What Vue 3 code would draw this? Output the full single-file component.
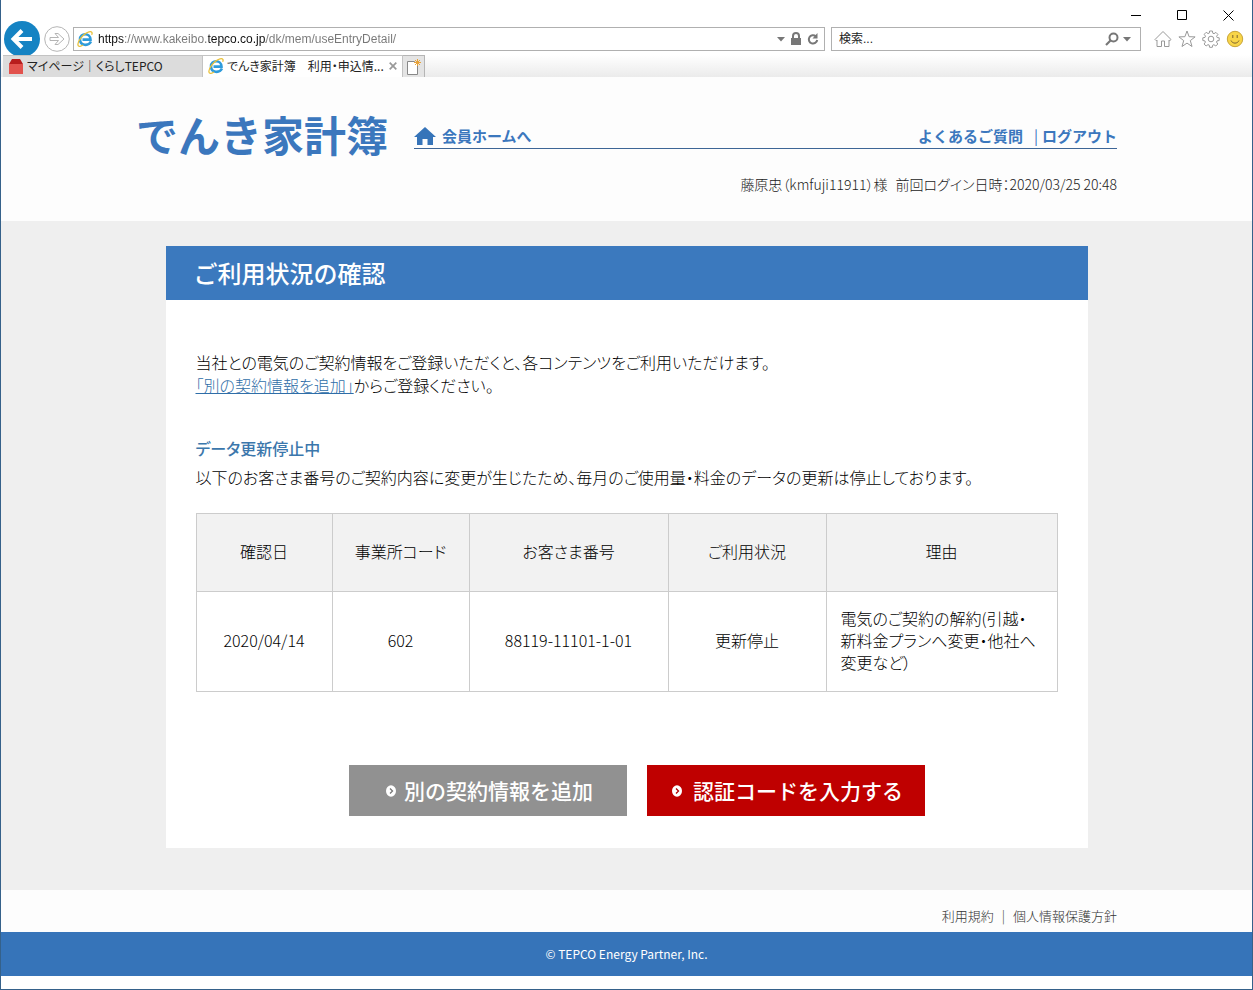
<script setup>
import { ref } from 'vue'

const address = ref('https://www.kakeibo.tepco.co.jp/dk/mem/useEntryDetail/')
const keyword = ref('')
const columns = ['確認日', '事業所コード', 'お客さま番号', 'ご利用状況', '理由']
const contracts = [
  {
    date: '2020/04/14',
    office: '602',
    customer: '88119-11101-1-01',
    status: '更新停止',
    reason: ['電気のご契約の解約(引越・', '新料金プランへ変更・他社へ', '変更など）'],
  },
]
</script>

<template>
  <div class="window">
    <div class="titlebar">
      <button class="win" aria-label="最小化"><svg viewBox="0 0 11 11"><path d="M0 5.5h10" /></svg></button>
      <button class="win" aria-label="最大化"><svg viewBox="0 0 11 11"><path d="M.5.5h9v9h-9z" /></svg></button>
      <button class="win" aria-label="閉じる"><svg viewBox="0 0 11 11"><path d="M.5.5l10 10M10.500.5l-10 10" /></svg></button>
    </div>

    <div class="toolbar">
      <button class="back" aria-label="戻る">
        <svg viewBox="0 0 36 36"><circle cx="18" cy="18" r="18" fill="#1583c3" /><path d="M28 18H10M18 9.500L9.500 18l8.500 8.500" fill="none" stroke="#fff" stroke-width="4" /></svg>
      </button>
      <button class="forward" aria-label="進む">
        <svg viewBox="0 0 26 26"><circle cx="13" cy="13" r="12.300" fill="#fff" stroke="#b5b5b5" /><path d="M6 11.500h8.500L11 7.500h3L20 13l-6 5.500h-3l3.500-4H6z" fill="none" stroke="#b5b5b5" /></svg>
      </button>
      <div class="box address">
        <svg class="ie" viewBox="0 0 16 16"><path d="M14 10.500c-2.500 5-11 4.500-11-2.200C3 1.500 13.500 1.500 13.500 8.600H5.500" fill="none" stroke="#2e9bdb" stroke-width="2.600" /><path d="M1.500 15C-1 12 6 2.500 12 .9c3-.8 3.700.8 2.600 2.900M1.500 15c1 .8 3 0 4.500-1" fill="none" stroke="#e9c13b" stroke-width="1.300" /></svg>
        <input v-model="address" class="url" type="text" aria-label="アドレス" />
        <button class="tool" aria-label="アドレスの履歴"><svg class="caret" viewBox="0 0 8 5"><path d="M0 0h8L4 4.500z" fill="#777" /></svg></button>
        <svg class="lock" viewBox="0 0 12 14"><path d="M3 7V4a3 3 0 0 1 6 0v3" fill="none" stroke="#777" stroke-width="2" /><path d="M1 6h10v7H1z" fill="#777" /></svg>
        <button class="tool" aria-label="更新"><svg class="reload" viewBox="0 0 12 14"><path d="M8.800 4.200A4.200 4.200 0 1 0 10.200 8" fill="none" stroke="#777" stroke-width="2" /><path d="M10.500 1v5.500H5.500z" fill="#777" /></svg></button>
      </div>
      <div class="box search">
        <input v-model="keyword" class="query" type="text" placeholder="検索..." aria-label="検索" />
        <button class="tool" aria-label="検索する"><svg class="glass" viewBox="0 0 14 14"><circle cx="8.500" cy="5.500" r="4" fill="none" stroke="#777" stroke-width="2" /><path d="M5.500 8.500L1 13" stroke="#777" stroke-width="2.200" /></svg></button>
        <button class="tool" aria-label="検索プロバイダー"><svg class="caret" viewBox="0 0 8 5"><path d="M0 0h8L4 4.500z" fill="#777" /></svg></button>
      </div>
      <div class="actions">
        <button class="tool" aria-label="ホーム"><svg viewBox="0 0 18 18"><path d="M1 9.500L9 1.500l8 8-1.200 1.200L15 10v6.500h-4.500V11h-3v5.500H3V10l-.8.7z" /></svg></button>
        <button class="tool" aria-label="お気に入り"><svg viewBox="0 0 18 18"><path d="M9 1l2.100 5.700 6 .2-4.800 3.700 1.700 5.900-5-3.400-5 3.400 1.700-5.900L.9 6.900l6-.2z" /></svg></button>
        <button class="tool" aria-label="設定"><svg viewBox="0 0 18 18"><path d="M7.600 1h2.800l.4 2.200 1.200.5 1.900-1.300 2 2-1.300 1.900.5 1.200 2.100.3v2.700l-2.200.4-.5 1.200 1.300 1.900-2 2-1.900-1.300-1.200.5-.4 2.100H7.600l-.4-2.200-1.200-.5L4.100 16l-2-2 1.300-1.900-.5-1.200L.8 10.500V7.800l2.200-.4.500-1.200L2.200 4.300l2-2 1.900 1.300 1.200-.5z" /><circle cx="9" cy="9" r="2.800" /></svg></button>
        <button class="tool" aria-label="フィードバック"><svg viewBox="0 0 18 18"><circle cx="9" cy="9" r="7.700" class="face" /><path d="M5 10.500c1.500 3.500 6.500 3.500 8 0" class="smile" /><path d="M6.800 5v3M11.200 5v3" class="smile" /></svg></button>
      </div>
    </div>

    <div class="tabs">
      <div class="tab">
        <svg class="favicon" viewBox="0 0 16 16"><path d="M1 6l3-5h8l3 5z" fill="#b81d1d" /><path d="M1 6h14v10H1z" fill="#e2524d" /></svg>
        <button class="label">マイページ｜くらしTEPCO</button>
      </div>
      <div class="tab current">
        <svg class="favicon" viewBox="0 0 16 16"><path d="M14 10.500c-2.500 5-11 4.500-11-2.200C3 1.500 13.500 1.500 13.500 8.600H5.500" fill="none" stroke="#2e9bdb" stroke-width="2.600" /><path d="M1.500 15C-1 12 6 2.500 12 .9c3-.8 3.700.8 2.600 2.900M1.500 15c1 .8 3 0 4.500-1" fill="none" stroke="#e9c13b" stroke-width="1.300" /></svg>
        <button class="label">でんき家計簿　利用・申込情...</button>
        <button class="close" aria-label="タブを閉じる"><svg viewBox="0 0 8 8"><path d="M.7.7l6.600 6.600M7.300.7L.7 7.300" stroke="#999" stroke-width="1.700" /></svg></button>
      </div>
      <button class="newtab" aria-label="新しいタブ">
        <svg viewBox="0 0 16 16"><path d="M1.500 2.500h7l3 3v10h-10z" fill="#fff" stroke="#888" /><path d="M11.500 0v7M8 3.500h7M9 1l5 5M14 1L9 6" stroke="#e8a33a" /></svg>
      </button>
    </div>

    <div class="page">
      <header class="header">
        <div class="brandrow">
          <h1 class="logo">でんき家計簿</h1>
          <nav class="nav">
            <a href="#home" class="home"><svg viewBox="0 0 22 18"><path d="M11 0l11 10h-3v8h-5.500v-6h-5v6H3v-8H0z" fill="#3674b9" /></svg>会員ホームへ</a>
            <a href="#faq" class="faq">よくあるご質問</a>
            <span class="bar">|</span>
            <a href="#logout">ログアウト</a>
          </nav>
        </div>
        <p class="login"><span>藤原忠（kmfuji11911）様</span><span>前回ログイン日時：2020/03/25 20:48</span></p>
      </header>

      <main class="main">
        <section class="card">
          <h2 class="title">ご利用状況の確認</h2>
          <div class="content">
            <p>当社との電気のご契約情報をご登録いただくと、各コンテンツをご利用いただけます。</p>
            <p><a href="#add" class="link">「別の契約情報を追加」</a>からご登録ください。</p>
            <h3 class="subtitle">データ更新停止中</h3>
            <p>以下のお客さま番号のご契約内容に変更が生じたため、毎月のご使用量・料金のデータの更新は停止しております。</p>
            <table class="contracts">
              <colgroup><col class="c1" /><col class="c2" /><col class="c3" /><col class="c4" /><col /></colgroup>
              <thead>
                <tr><th v-for="c in columns" :key="c" scope="col">{{ c }}</th></tr>
              </thead>
              <tbody>
                <tr v-for="r in contracts" :key="r.customer">
                  <td>{{ r.date }}</td>
                  <td>{{ r.office }}</td>
                  <td>{{ r.customer }}</td>
                  <td>{{ r.status }}</td>
                  <td class="reason"><div v-for="line in r.reason" :key="line">{{ line }}</div></td>
                </tr>
              </tbody>
            </table>
            <div class="buttons">
              <button class="btn"><svg viewBox="0 0 10 12"><ellipse cx="5" cy="6" rx="5" ry="5.800" fill="#fff" /><path d="M4 3.500L6.500 6 4 8.500" fill="none" stroke="#777" stroke-width="1.300" /></svg>別の契約情報を追加</button>
              <button class="btn primary"><svg viewBox="0 0 10 12"><ellipse cx="5" cy="6" rx="5" ry="5.800" fill="#fff" /><path d="M4 3.500L6.500 6 4 8.500" fill="none" stroke="#b00000" stroke-width="1.300" /></svg>認証コードを入力する</button>
            </div>
          </div>
        </section>
      </main>

      <footer>
        <div class="policies">
          <a href="#terms">利用規約</a><span>|</span><a href="#privacy">個人情報保護方針</a>
        </div>
        <p class="copyright">© TEPCO Energy Partner, Inc.</p>
      </footer>
    </div>
  </div>
</template>

<style>
body {
  background: #fff;
}
</style>

<style scoped>
* {
  box-sizing: border-box;
}
.window {
  min-height: 100vh;
  border: 1px solid #35618a;
  border-top: 0;
  background: #fff;
  color: #000;
  font: 16px/23px "Noto Sans CJK JP", sans-serif;
}
button {
  padding: 0;
  border: 0;
  background: none;
  color: inherit;
  font: inherit;
}
h1, h2, h3, p {
  margin: 0;
}
svg {
  display: block;
  flex: none;
}
.titlebar {
  display: flex;
  justify-content: flex-end;
  gap: 35px;
  height: 21px;
  padding: 9px 18px 0 0;
}
.win svg {
  width: 11px;
  height: 11px;
  fill: none;
  stroke: #000;
}
.toolbar {
  display: flex;
  align-items: center;
  height: 34px;
  padding: 2px 8px 0 3px;
  overflow: hidden;
}
.back svg {
  width: 36px;
  height: 36px;
}
.forward {
  margin: 0 3px 0 4px;
}
.forward svg {
  width: 26px;
  height: 26px;
}
.box {
  display: flex;
  align-items: center;
  height: 24px;
  border: 1px solid #b0b0b0;
  background: #fff;
}
.address {
  flex: 1;
  min-width: 0;
  gap: 5px;
  padding: 0 5px 0 3px;
}
.ie {
  width: 16px;
  height: 16px;
}
input {
  flex: 1;
  min-width: 0;
  height: 20px;
  padding: 0;
  border: 0;
  outline: 0;
  font: 12px/20px "Liberation Sans", "Noto Sans CJK JP", sans-serif;
}
.url {
  background: linear-gradient(to right, #111 26px, #777 26px 110px, #111 110px 168px, #777 168px);
  background-clip: text;
  -webkit-background-clip: text;
  color: transparent;
}
.query {
  color: #222;
}
.query::placeholder {
  color: #222;
}
.caret {
  width: 8px;
  height: 5px;
}
.lock, .reload {
  width: 12px;
  height: 14px;
}
.search {
  flex: none;
  width: 310px;
  gap: 4px;
  margin: 0 13px 0 6px;
  padding: 0 9px 0 7px;
}
.glass {
  width: 14px;
  height: 14px;
}
.actions {
  display: flex;
  gap: 6px;
}
.actions svg {
  width: 18px;
  height: 18px;
  fill: #fff;
  stroke: #999;
}
.actions .face {
  fill: #f8d548;
  stroke: #c9a53a;
}
.actions .smile {
  fill: none;
  stroke: #7c6330;
}
.tabs {
  display: flex;
  height: 22px;
  padding-left: 2px;
  background: linear-gradient(#fff, #ebebeb);
  font: 12px/20px "Noto Sans CJK JP", sans-serif;
  font-feature-settings: "palt";
}
.tab {
  display: flex;
  align-items: center;
  width: 200px;
  gap: 3px;
  padding: 0 5px 1px;
  border: 1px solid #c3c3c3;
  border-width: 1px 1px 0 0;
  background: #dcdcdc;
}
.current {
  background: #fff;
}
.favicon {
  width: 16px;
  height: 16px;
}
.label {
  flex: 1;
  overflow: hidden;
  color: #222;
  text-align: left;
  white-space: nowrap;
}
.close svg {
  width: 8px;
  height: 8px;
}
.newtab {
  width: 22px;
  padding-left: 3px;
  border: 1px solid #b5b5b5;
  border-width: 1px 1px 0 0;
  background: #e4e4e4;
}
.newtab svg {
  width: 16px;
  height: 16px;
}
.header {
  height: 144px;
  padding: 36px 24px 0;
  background: #fdfdfd;
}
.brandrow {
  display: flex;
  justify-content: space-between;
  max-width: 981px;
  height: 48px;
  margin: 0 auto;
}
.logo {
  color: #3b77bd;
  font-size: 42px;
  line-height: 42px;
  white-space: nowrap;
}
.nav {
  display: flex;
  align-items: flex-end;
  flex: 0 1 703px;
  height: 36px;
  padding-bottom: 1px;
  border-bottom: 1px solid #3d6596;
  color: #3b77bd;
  font-size: 15px;
  font-weight: bold;
}
.nav a {
  color: inherit;
  text-decoration: none;
}
.nav .home {
  display: flex;
  align-items: center;
  gap: 6px;
  margin-right: auto;
}
.home svg {
  width: 22px;
  height: 18px;
}
.bar {
  margin: 0 4px 0 11px;
  font-weight: normal;
}
.login {
  display: flex;
  justify-content: flex-end;
  gap: 8px;
  max-width: 981px;
  margin: 12px auto 0;
  color: #222;
  font-size: 14px;
  font-weight: 300;
  font-feature-settings: "palt";
}
.main {
  padding: 25px 24px 42px;
  background: #efefef;
}
.card {
  max-width: 922px;
  margin: 0 auto;
  background: #fff;
}
.title {
  padding: 0 28px;
  background: #3b79be;
  color: #fff;
  font-size: 24px;
  font-weight: 500;
  line-height: 54px;
}
.content {
  padding: 51px 30px 32px;
  font-weight: 300;
  font-feature-settings: "palt";
}
.link {
  color: #2f6ea8;
}
.subtitle {
  margin: 40px 0 6px;
  color: #3b77ac;
  font-size: 16px;
  font-weight: 500;
}
.contracts {
  width: 100%;
  margin-top: 24px;
  border-collapse: collapse;
  table-layout: fixed;
  line-height: 22px;
  text-align: center;
}
.c1 {
  width: 136px;
}
.c2 {
  width: 137px;
}
.c3 {
  width: 199px;
}
.c4 {
  width: 158px;
}
th, td {
  padding: 0 8px 4px;
  border: 1px solid #ccc;
}
th {
  height: 78px;
  background: #f2f2f2;
  font-weight: inherit;
}
td {
  height: 100px;
}
.reason {
  padding: 0 14px 4px;
  text-align: left;
}
.buttons {
  display: flex;
  justify-content: center;
  gap: 20px;
  margin-top: 73px;
  padding-left: 20px;
}
.btn {
  display: flex;
  align-items: center;
  justify-content: center;
  gap: 8px;
  width: 278px;
  height: 51px;
  padding-left: 4px;
  background: #919191;
  color: #fff;
  font-size: 21px;
  font-weight: 500;
  font-feature-settings: normal;
}
.primary {
  gap: 11px;
  background: #bf0000;
}
.btn svg {
  width: 10px;
  height: 12px;
}
.policies {
  display: flex;
  justify-content: flex-end;
  align-items: center;
  gap: 8px;
  max-width: 981px;
  height: 42px;
  margin: 0 auto;
  padding-top: 8px;
  color: #333;
  font-size: 13px;
  font-weight: 300;
}
.policies a {
  color: inherit;
  text-decoration: none;
}
footer {
  background: #fdfdfd;
}
.copyright {
  background: #3674b9;
  color: #fff;
  font-size: 12px;
  line-height: 44px;
  text-align: center;
}
</style>
